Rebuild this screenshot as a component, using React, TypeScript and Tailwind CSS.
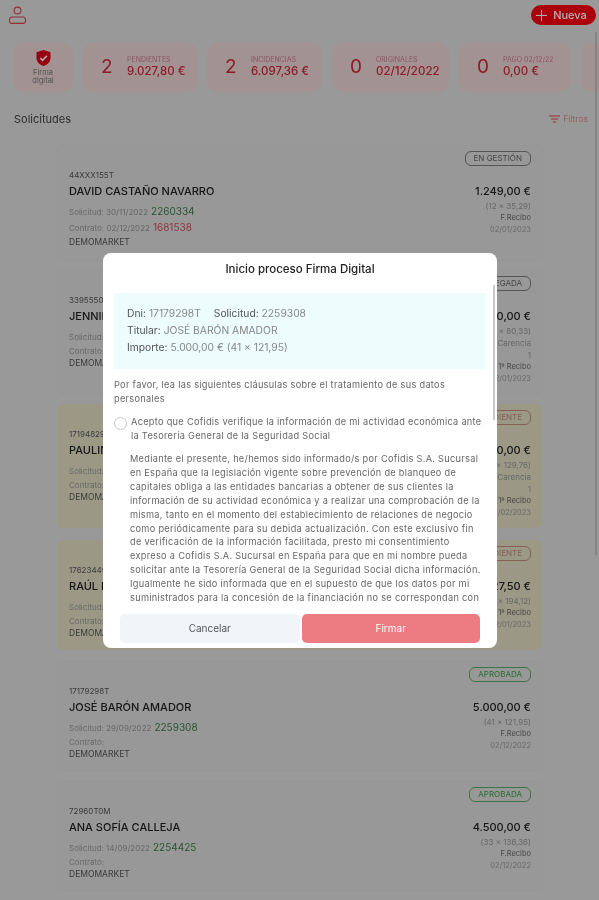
import React from "react";

type CardData = {
  dni: string; name: string; sol: string; solNum: string; con: string; conNum?: string; market: string;
  status: string; statusCls: string; amount: string; plan: string; carencia?: boolean; recibo: string; fecha: string;
  yellow?: boolean; cls: string;
};

const cards: CardData[] = [
  { dni: "44XXX155T", name: "DAVID CASTAÑO NAVARRO", sol: "Solicitud: 30/11/2022", solNum: "2260334", con: "Contrato: 02/12/2022", conNum: "1681538", market: "DEMOMARKET", status: "EN GESTIÓN", statusCls: "text-[#666] border-[#7a7a7a]", amount: "1.249,00 €", plan: "(12 x 35,29)", recibo: "F.Recibo", fecha: "02/01/2023", cls: "h-[116px] mb-[9px]" },
  { dni: "33955504K", name: "JENNIFER LÓPEZ RUIZ", sol: "Solicitud: 28/11/2022", solNum: "2258811", con: "Contrato:", market: "DEMOMARKET", status: "DENEGADA", statusCls: "text-[#666] border-[#7a7a7a]", amount: "3.000,00 €", plan: "(37 x 80,33)", carencia: true, recibo: "1º Recibo", fecha: "02/01/2023", cls: "h-[124px] mb-[10px]" },
  { dni: "17194829C", name: "PAULINA GARCÍA LOZANO", sol: "Solicitud: 25/11/2022", solNum: "2257120", con: "Contrato:", market: "DEMOMARKET", status: "PENDIENTE", statusCls: "text-[#c08a78] border-[#c08a78]", amount: "6.000,00 €", plan: "(45 x 129,76)", carencia: true, recibo: "1º Recibo", fecha: "02/02/2023", yellow: true, cls: "h-[124px] mb-[12px]" },
  { dni: "17623449X", name: "RAÚL PÉREZ MARTÍN", sol: "Solicitud: 24/11/2022", solNum: "2256540", con: "Contrato:", market: "DEMOMARKET", status: "PENDIENTE", statusCls: "text-[#c08a78] border-[#c08a78]", amount: "4.027,50 €", plan: "(24 x 194,12)", recibo: "1º Recibo", fecha: "02/01/2023", yellow: true, cls: "h-[110px] mb-[11px]" },
  { dni: "17179298T", name: "JOSÉ BARÓN AMADOR", sol: "Solicitud: 29/09/2022", solNum: "2259308", con: "Contrato:", market: "DEMOMARKET", status: "APROBADA", statusCls: "text-[#3a9a48] border-[#5aa566]", amount: "5.000,00 €", plan: "(41 x 121,95)", recibo: "F.Recibo", fecha: "02/12/2022", cls: "h-[110px] mb-[10px]" },
  { dni: "72960T0M", name: "ANA SOFÍA CALLEJA", sol: "Solicitud: 14/09/2022", solNum: "2254425", con: "Contrato:", market: "DEMOMARKET", status: "APROBADA", statusCls: "text-[#3a9a48] border-[#5aa566]", amount: "4.500,00 €", plan: "(33 x 136,36)", recibo: "F.Recibo", fecha: "02/12/2022", cls: "h-[110px] mb-[10px]" },
];

const kpis = [
  { n: "2", label: "PENDIENTES", value: "9.027,80 €", w: "w-[114px]" },
  { n: "2", label: "INCIDENCIAS", value: "6.097,36 €", w: "w-[115px]" },
  { n: "0", label: "ORIGINALES", value: "02/12/2022", w: "w-[117px]" },
  { n: "0", label: "PAGO 02/12/22", value: "0,00 €", w: "w-[112px]" },
  { n: "0", label: "", value: "", w: "w-[60px]" },
];

const legal = [
  "Mediante el presente, he/hemos sido informado/s por Cofidis S.A. Sucursal",
  "en España que la legislación vigente sobre prevención de blanqueo de",
  "capitales obliga a las entidades bancarias a obtener de sus clientes la",
  "información de su actividad económica y a realizar una comprobación de la",
  "misma, tanto en el momento del establecimiento de relaciones de negocio",
  "como periódicamente para su debida actualización. Con este exclusivo fin",
  "de verificación de la información facilitada, presto mi consentimiento",
  "expreso a Cofidis S.A. Sucursal en España para que en mi nombre pueda",
  "solicitar ante la Tesorería General de la Seguridad Social dicha información.",
  "Igualmente he sido informada que en el supuesto de que los datos por mi",
  "suministrados para la concesión de la financiación no se correspondan con",
];

function Card({ c }: { c: CardData }) {
  return (
    <div className={`${c.cls} shrink-0 rounded-md border px-[11px] pt-[5px] flex justify-between ${c.yellow ? "bg-[#dedcc0] border-transparent" : "bg-[#dadada] border-[#d7d7d7]"}`}>
      <div className="pt-[18px] flex flex-col">
        <div className="text-[8px] leading-[12px] text-[#555]">{c.dni}</div>
        <div className="text-[11px] leading-[17px] font-medium text-[#222] mt-[2px]">{c.name}</div>
        <div className="text-[8px] leading-[15px] text-[#959595] mt-[4px] flex items-baseline gap-[3px]">
          {c.sol}<span className="text-[10px] text-[#3c7a49]">{c.solNum}</span>
        </div>
        {c.conNum ? (
          <div className="text-[8px] leading-[14px] text-[#959595] flex items-baseline gap-[3px]">
            {c.con}<span className="text-[10px] text-[#cc4a5a]">{c.conNum}</span>
          </div>
        ) : (
          <div className="text-[8px] leading-[12px] text-[#959595]">{c.con}</div>
        )}
        <div className={`text-[8.5px] leading-[13px] text-[#555] ${c.conNum ? "mt-[1px]" : ""}`}>{c.market}</div>
      </div>
      <div className="flex flex-col items-end">
        <div className={`h-[15px] px-[8px] rounded-[6px] border text-[8px] leading-[13px] ${c.statusCls}`}>{c.status}</div>
        <div className="text-[11px] leading-[17px] font-medium text-[#222] mt-[17px]">{c.amount}</div>
        <div className="text-[8px] leading-[12px] text-[#959595]">{c.plan}</div>
        {c.carencia && <div className="text-[8px] leading-[12px] text-[#959595]">Carencia</div>}
        {c.carencia && <div className="text-[8px] leading-[12px] text-[#959595]">1</div>}
        <div className="text-[7.5px] leading-[12px] text-[#666]">{c.recibo}</div>
        <div className="text-[7.5px] leading-[12px] text-[#959595]">{c.fecha}</div>
      </div>
    </div>
  );
}

export default function App() {
  return (
    <div className="relative w-[599px] h-[900px] overflow-hidden bg-[#dbdbdb] font-['Inter','Liberation_Sans',sans-serif] blur-[0.5px]">
      <div className="h-[35px] flex items-start justify-between pl-[9px] pr-[3px] pt-[5px]">
        <svg width="17" height="19" viewBox="0 0 17 19" fill="none" stroke="#d8424e" strokeWidth="1.1" className="mt-[1px]">
          <circle cx="8.5" cy="4.5" r="3.4" />
          <path d="M3.5 11h10c2 0 3 1.6 3 3.4v.6c0 1.300-1 2.400-2.400 2.400H2.900C1.500 17.400.5 16.300.5 15v-.6C.5 12.600 1.500 11 3.500 11Z" />
        </svg>
        <div className="h-[20px] w-[65px] pr-[4px] rounded-full bg-[#f50012] flex items-center justify-center gap-[6px] text-white text-[11px] font-medium">
          <svg width="11" height="11" viewBox="0 0 11 11" stroke="white" strokeWidth="1"><path d="M5.500 0v11M0 5.500h11" /></svg>
          Nueva
        </div>
      </div>
      <div className="flex gap-[10px] pl-[13px] mt-[8px]">
        <div className="w-[60px] h-[49px] shrink-0 rounded-[10px] bg-[#e8d2d2] flex flex-col items-center pt-[7px]">
          <svg width="15" height="16" viewBox="0 0 15 16">
            <path d="M7.500 0 14.500 2.200V8c0 4-3.200 6.600-7 8C3.700 14.600.5 12 .5 8V2.200Z" fill="#d6001c" />
            <path d="M4.300 8l2.300 2.300 4.300-4.500" stroke="white" strokeWidth="1.600" fill="none" />
          </svg>
          <div className="text-[7.5px] leading-[8px] text-[#777] text-center mt-[3px]">Firma<br />digital</div>
        </div>
        {kpis.map((k, i) => (
          <div key={i} className={`${k.w} h-[49px] shrink-0 rounded-[10px] bg-[#e8d2d2] flex items-center pl-[18px] gap-[14px]`}>
            <div className="text-[19px] text-[#c8283a] w-[12px]">{k.n}</div>
            <div className="flex flex-col">
              <div className="text-[7px] leading-[8px] text-[#c77d86]">{k.label}</div>
              <div className="text-[11.5px] leading-[15px] font-medium text-[#c8283a] whitespace-nowrap">{k.value}</div>
            </div>
          </div>
        ))}
      </div>
      <div className="flex items-center justify-between pl-[14px] pr-[11px] mt-[12px] h-[30px]">
        <div className="text-[11px] text-[#444]">Solicitudes</div>
        <div className="flex items-center gap-[3px] text-[8.5px] text-[#d78a90]">
          <svg width="11" height="8" viewBox="0 0 11 8" stroke="#d8424e" strokeWidth="1"><path d="M0 1h11M2 4h7M4 7h3" /></svg>
          Filtros
        </div>
      </div>
      <div className="mx-[57px] w-[486px] mt-[11px] flex flex-col">
        {cards.map((c) => <Card key={c.dni} c={c} />)}
        <div className="h-[110px] shrink-0 rounded-md border border-[#d7d7d7] bg-[#dadada]" />
      </div>
      <div className="absolute right-[2px] top-[32px] h-[523px] w-[2px] bg-[#bdbdbd]" />
      <div className="absolute inset-0 bg-black/30" />
      <div className="absolute left-[103px] top-[253px] w-[394px] h-[395px] bg-white rounded-[8px] overflow-hidden flex flex-col text-[#666]">
        <div className="text-center text-[11.5px] font-medium text-[#222] pt-[8px] leading-[16px]">Inicio proceso Firma Digital</div>
        <div className="mx-[11px] mt-[16px] h-[76px] bg-[#edfcfc] rounded-[2px] px-[13px] pt-[12px] text-[10.3px] leading-[17px] text-[#555]">
          <div>Dni: <span className="text-[#888]">17179298T</span> <span className="ml-[10px]">Solicitud: <span className="text-[#888]">2259308</span></span></div>
          <div>Titular: <span className="text-[#888]">JOSÉ BARÓN AMADOR</span></div>
          <div>Importe: <span className="text-[#888]">5.000,00 € (41 x 121,95)</span></div>
        </div>
        <div className="mx-[11px] mt-[9px] text-[9.2px] tracking-[0.3px] leading-[14px] whitespace-nowrap">
          <div>Por favor, lea las siguientes cláusulas sobre el tratamiento de sus datos</div>
          <div>personales</div>
        </div>
        <div className="mx-[11px] mt-[9px] flex gap-[4px] text-[9.2px] tracking-[0.3px] leading-[14px] whitespace-nowrap">
          <div className="w-[13px] h-[13px] mt-[2px] rounded-full border border-[#c8c8c8] shrink-0" />
          <div>
            <div>Acepto que Cofidis verifique la información de mi actividad económica ante</div>
            <div>la Tesorería General de la Seguridad Social</div>
          </div>
        </div>
        <div className="ml-[27px] mt-[9px] text-[9.2px] tracking-[0.3px] leading-[13.9px] whitespace-nowrap">
          {legal.map((l) => <div key={l}>{l}</div>)}
        </div>
        <div className="absolute left-[17px] right-[17px] bottom-[5px] flex gap-[2px]">
          <div className="w-[180px] h-[29px] rounded-[5px] bg-[#f2f5f8] flex items-center justify-center text-[10px] text-[#555]">Cancelar</div>
          <div className="w-[179px] h-[29px] rounded-[5px] bg-[#ed7b82] flex items-center justify-center text-[10px] text-white">Firmar</div>
        </div>
        <div className="absolute right-[2px] top-[32px] w-[2px] h-[135px] bg-[#c8c8c8]" />
      </div>
    </div>
  );
}
